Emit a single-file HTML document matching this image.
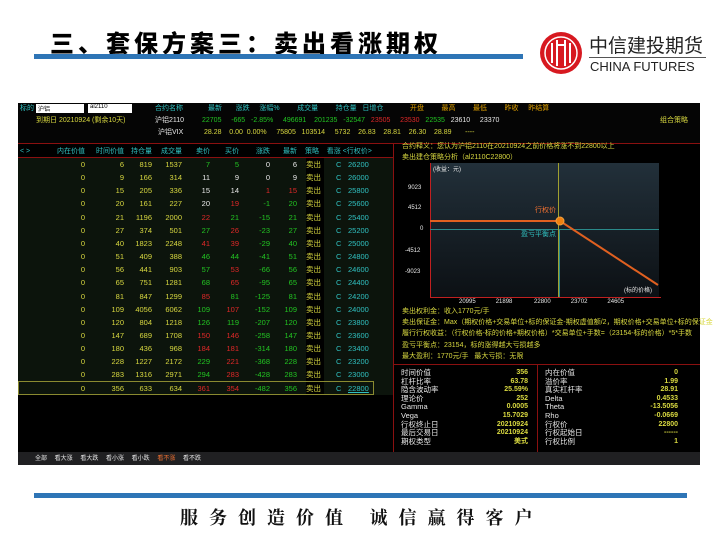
<!DOCTYPE html>
<html><head><meta charset="utf-8"><style>
*{margin:0;padding:0;box-sizing:border-box}
body{width:720px;height:540px;background:#fff;position:relative;overflow:hidden;font-family:"Liberation Sans","Noto Sans CJK SC",sans-serif}
.a{position:absolute;white-space:nowrap}
.t{font-size:7px;line-height:8px}
.r{text-align:right}
.y{color:#d8d840}.g{color:#22c422}.rd{color:#e02828}.w{color:#e8e8e8}.c{color:#30c0c0}.o{color:#f07030}
</style></head><body>
<div class="a" style="left:50px;top:24px;font-size:24px;font-weight:900;font-family:'Noto Sans CJK SC',sans-serif;color:#000;letter-spacing:4px">三、套保方案三：卖出看涨期权</div>
<div class="a" style="left:34px;top:54px;width:489px;height:5px;background:#2e75b6"></div>
<svg class="a" style="left:539px;top:31px" width="44" height="44" viewBox="0 0 44 44"><circle cx="22" cy="22" r="21" fill="#d71920"/><circle cx="22" cy="22" r="16" fill="none" stroke="#fff" stroke-width="1.5"/><path d="M13 12v20M18 9v26M26 9v26M31 12v20M18 14h8" stroke="#fff" stroke-width="2" fill="none"/></svg>
<div class="a" style="left:589px;top:33px;font-size:19px;color:#222;font-family:'Noto Sans CJK SC',sans-serif;line-height:24px">中信建投期货</div>
<div class="a" style="left:589px;top:57px;width:117px;height:1px;background:#555"></div>
<div class="a" style="left:590px;top:59px;font-size:13px;color:#222">CHINA FUTURES</div>

<div class="a" style="left:18px;top:103px;width:682px;height:362px;background:#000"></div>
<div class="a" style="left:18px;top:103px;width:682px;height:40px;background:#050505"></div>
<div class="a t c" style="left:20px;top:105px">标的</div>
<div class="a" style="left:36px;top:104px;width:48px;height:9px;background:#fff;font-size:6px;color:#000;padding-left:2px">沪铝</div>
<div class="a" style="left:88px;top:104px;width:44px;height:9px;background:#fff;font-size:6px;color:#000;padding-left:2px">al2110</div>
<div class="a t c" style="left:155px;top:105px">合约名称</div>
<div class="a t c" style="left:208px;top:105px">最新 &nbsp; &nbsp; &nbsp; 涨跌 &nbsp; &nbsp; 涨幅% &nbsp; &nbsp; &nbsp; &nbsp; 成交量 &nbsp; &nbsp; &nbsp; &nbsp; 持仓量 &nbsp; 日增仓</div>
<div class="a t" style="left:410px;top:105px;color:#e0a000">开盘 &nbsp; &nbsp; &nbsp; &nbsp; 最高 &nbsp; &nbsp; &nbsp; &nbsp; 最低 &nbsp; &nbsp; &nbsp; &nbsp; 昨收 &nbsp; &nbsp; 昨结算</div>
<div class="a t y" style="left:36px;top:117px">到期日 20210924 (剩余10天)</div>
<div class="a t w" style="left:155px;top:117px">沪铝2110</div>
<div class="a t" style="left:202px;top:117px"><span class="g">22705 &nbsp; &nbsp; -665 &nbsp; -2.85% &nbsp; &nbsp; 496691 &nbsp; &nbsp;201235 &nbsp; -32547</span> &nbsp; <span class="rd">23505 &nbsp; &nbsp; 23530</span> &nbsp; <span class="g">22535</span> &nbsp; <span class="w">23610 &nbsp; &nbsp; 23370</span></div>
<div class="a t y" style="left:660px;top:117px">组合策略</div>
<div class="a t w" style="left:158px;top:129px">沪铝VIX</div>
<div class="a t y" style="left:204px;top:129px">28.28 &nbsp; &nbsp;0.00 &nbsp;0.00% &nbsp; &nbsp; 75805 &nbsp; 103514 &nbsp; &nbsp; 5732 &nbsp; &nbsp;26.83 &nbsp; &nbsp;28.81 &nbsp; &nbsp;26.30 &nbsp; &nbsp;28.89 &nbsp; &nbsp; &nbsp; ----</div>
<div class="a" style="left:18px;top:143px;width:682px;height:1px;background:#8a1010"></div>
<div class="a" style="left:18px;top:157px;width:375px;height:1px;background:#8a1010"></div>
<div class="a" style="left:18px;top:158px;width:375px;height:237px;background:#0c140c"></div>
<div class="a" style="left:306px;top:158px;width:18px;height:237px;background:#000"></div>
<div class="a" style="left:18px;top:381px;width:356px;height:14px;border:1px solid #8a8a30"></div>
<div class="a t c" style="left:20px;top:148px">&lt; &gt;</div>
<div id="hdr"></div>
<div id="rows"></div>
<div class="a" style="left:393px;top:143px;width:1px;height:310px;background:#8a1010"></div>
<div class="a t y" style="left:402px;top:143px">合约释义：您认为沪铝2110在20210924之前价格将涨不到22800以上</div>
<div class="a t y" style="left:402px;top:154px">卖出建仓策略分析（al2110C22800）</div>
<div class="a" style="left:430px;top:163px;width:229px;height:134px;background:linear-gradient(#22303a,#0c1014)"></div>
<div class="a" style="left:430px;top:163px;width:1px;height:135px;background:#c02020"></div>
<div class="a" style="left:430px;top:297px;width:231px;height:1px;background:#c02020"></div>
<div class="a" style="left:430px;top:229px;width:229px;height:1px;background:#2a8a8a"></div>
<div class="a" style="left:558px;top:163px;width:1px;height:134px;background:#a0a030"></div>
<div class="a" style="left:559px;top:230px;width:1px;height:67px;background:#2a8a8a"></div>
<svg class="a" style="left:430px;top:163px" width="230" height="135"><polyline points="0,58 130,58 228,122" fill="none" stroke="#e06020" stroke-width="2"/><circle cx="130" cy="58" r="4" fill="#f08010" stroke="#f0a040"/></svg>
<div class="a t w" style="left:433px;top:166px;font-size:6px">(收益：元)</div>
<div class="a t o" style="left:535px;top:207px">行权价</div>
<div class="a t c" style="left:521px;top:231px">盈亏平衡点</div>
<div class="a t w" style="left:624px;top:287px;font-size:6px">(标的价格)</div>
<div class="a w" style="left:408px;top:185px;font-size:6px">9023</div>
<div class="a w" style="left:408px;top:205px;font-size:6px">4512</div>
<div class="a w" style="left:420px;top:226px;font-size:6px">0</div>
<div class="a w" style="left:405px;top:248px;font-size:6px">-4512</div>
<div class="a w" style="left:405px;top:269px;font-size:6px">-9023</div>
<div class="a w" style="left:459px;top:299px;font-size:6px">20995 &nbsp; &nbsp; &nbsp; &nbsp; &nbsp; &nbsp;21898 &nbsp; &nbsp; &nbsp; &nbsp; &nbsp; &nbsp; 22800 &nbsp; &nbsp; &nbsp; &nbsp; &nbsp; &nbsp;23702 &nbsp; &nbsp; &nbsp; &nbsp; &nbsp; &nbsp;24605</div>
<div class="a t y" style="left:402px;top:308px">卖出权利金：收入1770元/手</div>
<div class="a t y" style="left:402px;top:319px">卖出保证金：Max（期权价格+交易单位+标的保证金-期权虚值额/2，期权价格+交易单位+标的保证金</div>
<div class="a t y" style="left:402px;top:330px">履行行权收益：（行权价格-标的价格+期权价格）*交易单位+手数=（23154-标的价格）*5*手数</div>
<div class="a t y" style="left:402px;top:342px">盈亏平衡点：23154，标的涨得越大亏损越多</div>
<div class="a t y" style="left:402px;top:353px">最大盈利：1770元/手 &nbsp; 最大亏损：无限</div>
<div class="a" style="left:393px;top:364px;width:307px;height:1px;background:#8a1010"></div>
<div class="a" style="left:537px;top:365px;width:1px;height:88px;background:#8a1010"></div>
<div id="info"></div>
<div class="a" style="left:18px;top:452px;width:682px;height:13px;background:#202022"></div>
<div class="a t w" style="left:35px;top:455px;font-size:6px;word-spacing:6px">全部 看大涨 看大跌 看小涨 看小跌 <span class="o">看不涨</span> 看不跌</div>
<div class="a" style="left:34px;top:493px;width:653px;height:5px;background:#2e75b6"></div>
<div class="a" style="left:180px;top:504px;font-size:18px;font-weight:bold;font-family:'Noto Serif CJK SC',serif;color:#111;letter-spacing:11px">服务创造价值&nbsp;诚信赢得客户</div>
<script>
var H=["内在价值",85,"时间价值",124,"持仓量",152,"成交量",182,"卖价",210,"买价",239,"涨跌",270,"最新",297];
var h='';for(var i=0;i<H.length;i+=2)h+='<div class="a t c r" style="left:'+(H[i+1]-40)+'px;width:40px;top:148px">'+H[i]+'</div>';
h+='<div class="a t c" style="left:305px;top:148px">策略 &nbsp; &nbsp;看涨 &lt;行权价&gt;</div>';
document.getElementById('hdr').innerHTML=h;
var R=[[6,819,1537,7,5,0,6,26200,'g','g','w','w'],[9,166,314,11,9,0,9,26000,'w','w','w','w'],[15,205,336,15,14,1,15,25800,'w','w','rd','rd'],[20,161,227,20,19,-1,20,25600,'w','rd','g','g'],[21,1196,2000,22,21,-15,21,25400,'rd','g','g','g'],[27,374,501,27,26,-23,27,25200,'g','rd','g','g'],[40,1823,2248,41,39,-29,40,25000,'rd','rd','g','g'],[51,409,388,46,44,-41,51,24800,'g','g','g','g'],[56,441,903,57,53,-66,56,24600,'g','rd','g','g'],[65,751,1281,68,65,-95,65,24400,'g','rd','g','g'],[81,847,1299,85,81,-125,81,24200,'rd','g','g','g'],[109,4056,6062,109,107,-152,109,24000,'g','rd','g','g'],[120,804,1218,126,119,-207,120,23800,'g','g','g','g'],[147,689,1708,150,146,-258,147,23600,'rd','rd','g','g'],[180,436,968,184,181,-314,180,23400,'rd','rd','g','g'],[228,1227,2172,229,221,-368,228,23200,'g','rd','g','g'],[283,1316,2971,294,283,-428,283,23000,'g','rd','g','g'],[356,633,634,361,354,-482,356,22800,'rd','rd','g','g']];
var s='';R.forEach(function(r,k){var y=161+k*13.15;var v=[[0,85,'y'],[r[0],124,'y'],[r[1],152,'y'],[r[2],182,'y'],[r[3],210,r[8]],[r[4],239,r[9]],[r[5],270,r[10]],[r[6],297,r[11]]];
v.forEach(function(c){s+='<div class="a r '+c[2]+'" style="left:'+(c[1]-40)+'px;width:40px;top:'+y+'px;font-size:7.5px;line-height:8px">'+c[0]+'</div>'});
s+='<div class="a y" style="left:306px;top:'+y+'px;font-size:7.5px;line-height:8px">卖出</div><div class="a c" style="left:336px;top:'+y+'px;font-size:7.5px;line-height:8px">C</div><div class="a c" style="left:348px;top:'+y+'px;font-size:7.5px;line-height:8px;'+(k==17?'text-decoration:underline':'')+'">'+r[7]+'</div>'});
document.getElementById('rows').innerHTML=s;
var L=[["时间价值","356"],["杠杆比率","63.78"],["隐含波动率","25.59%"],["理论价","252"],["Gamma","0.0005"],["Vega","15.7029"],["行权终止日","20210924"],["最后交易日","20210924"],["期权类型","美式"]];
var Rr=[["内在价值","0"],["溢价率","1.99"],["真实杠杆率","28.91"],["Delta","0.4533"],["Theta","-13.5056"],["Rho","-0.0669"],["行权价","22800"],["行权起始日","------"],["行权比例","1"]];
var t='';for(var i=0;i<9;i++){var y=369+i*8.6;
t+='<div class="a w" style="left:401px;top:'+y+'px;font-size:7.5px;line-height:8px">'+L[i][0]+'</div><div class="a y r" style="left:470px;width:58px;top:'+y+'px;font-size:7px;line-height:8px;font-weight:bold">'+L[i][1]+'</div>';
t+='<div class="a w" style="left:545px;top:'+y+'px;font-size:7.5px;line-height:8px">'+Rr[i][0]+'</div><div class="a y r" style="left:620px;width:58px;top:'+y+'px;font-size:7px;line-height:8px;font-weight:bold">'+Rr[i][1]+'</div>';}
document.getElementById('info').innerHTML=t;
</script>
</body></html>
